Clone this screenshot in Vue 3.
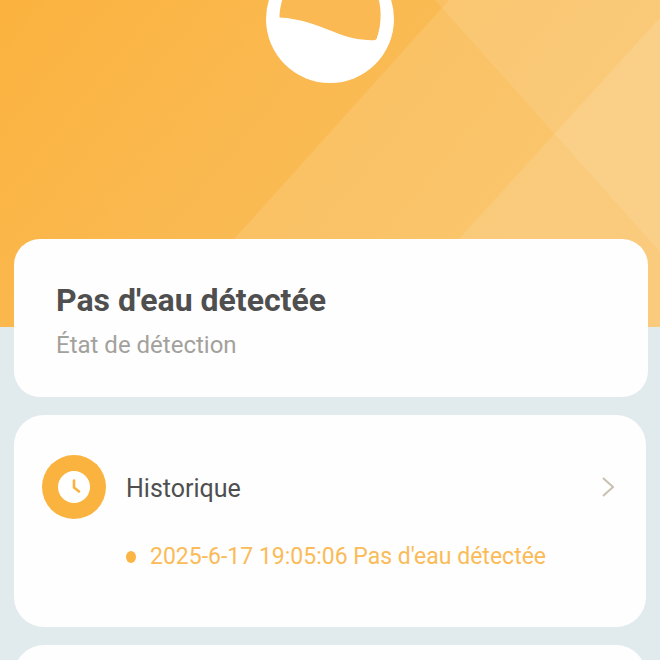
<template>
  <main class="device">
    <header class="hero">
      <!-- fond à bandes diagonales -->
      <svg class="hero-bg" viewBox="0 0 660 327" preserveAspectRatio="none" aria-hidden="true">
        <defs>
          <linearGradient id="base" gradientUnits="userSpaceOnUse" x1="0" y1="0" x2="420" y2="340">
            <stop offset="0" stop-color="#fbb23e" />
            <stop offset="0.5" stop-color="#fab950" />
            <stop offset="1" stop-color="#fabe5a" />
          </linearGradient>
        </defs>
        <rect width="660" height="327" fill="url(#base)" />
        <path class="band" d="M449 0H660V327H155Z" />
        <path class="band" d="M676 0V327H379Z" />
        <path class="band faint" d="M435 0H660V252Z" />
      </svg>

      <!-- niveau d'eau -->
      <svg class="gauge" viewBox="0 0 128 83" role="img" :aria-label="status">
        <circle cx="64" cy="19" r="64" fill="#fff" />
        <path
          fill="#fab952"
          d="M13.500 17.500C13.500 10 15 4 17 -3H112C115.500 8 116 24 110.500 39C109.500 40.200 108 40.200 106 40.200C93 40.200 80 37 67 31.500C49 24.500 34 18.500 13.500 17.500Z"
        />
      </svg>
    </header>

    <section class="card status">
      <h1>{{ status }}</h1>
      <p>État de détection</p>
    </section>

    <section class="card history">
      <button class="row" type="button">
        <svg class="clock" viewBox="0 0 64 64" aria-hidden="true">
          <circle cx="32" cy="32" r="32" fill="#fab33e" />
          <circle cx="32" cy="32" r="16" fill="#fff" />
          <path d="M32 25.500V32.500L37 36.500" />
        </svg>
        <span class="label">Historique</span>
        <svg class="chevron" viewBox="0 0 12 20" aria-hidden="true">
          <path d="M1 1L11 10L1 19" />
        </svg>
      </button>

      <ul class="events">
        <li v-for="e in events" :key="e.date">{{ e.date }} {{ e.text }}</li>
      </ul>
    </section>

    <section class="card next"></section>
  </main>
</template>

<script setup>
import { ref } from 'vue'

const status = ref("Pas d'eau détectée")
const events = ref([
  { date: '2025-6-17 19:05:06', text: "Pas d'eau détectée" },
])
</script>

<style>
body{ background: #e1eaed; }
</style>

<style scoped>
.device{
  height: 100vh;
  overflow: hidden;
  background: #e1eaed;
  font-family: Roboto, "Liberation Sans", sans-serif;
  color: #4f4f4f;
}

/* ===== bandeau ===== */
.hero{
  position: relative;
  display: flex; justify-content: center;
  padding-bottom: 244px;
}
.hero-bg{ position: absolute; inset: 0; width: 100%; height: 100%; }
.band{ fill: #fff; fill-opacity: .11; }
.band.faint{ fill-opacity: .09; }
.gauge{ position: relative; width: 128px; height: 83px; }

/* ===== cartes ===== */
.card{
  position: relative;
  margin: 0 14px 18px;
  border-radius: 30px;
  background: #fefefe;
}
.status{
  margin-top: -88px;
  margin-right: 12px;
  padding: 42px 42px 38px;
  border-radius: 26px;
}
.status h1{ margin: 0 0 12px; font-size: 32px; line-height: 38px; font-weight: 700; }
.status p{ margin: 0; font-size: 24px; line-height: 28px; color: #a3a19c; }

.history{ padding: 40px 32px 54px 28px; }
.row{
  display: flex; align-items: center; gap: 20px;
  width: 100%; padding: 0;
  border: 0; background: none; cursor: pointer;
  font: inherit; color: inherit; text-align: left;
}
.clock{ width: 64px; height: 64px; }
.clock path{ fill: none; stroke: #fab33e; stroke-width: 2.6; stroke-linecap: round; stroke-linejoin: round; }
.label{ flex: 1; padding-top: 3px; font-size: 25px; line-height: 32px; }
.chevron{ width: 12px; height: 20px; }
.chevron path{ fill: none; stroke: #c9c1b0; stroke-width: 2; }

.events{ margin: 22px 0 0 84px; padding: 0; list-style: none; }
.events li{
  display: flex; align-items: center; gap: 14px;
  font-size: 23px; line-height: 32px; color: #fabb58;
}
.events li::before{ content: ""; width: 10px; height: 12px; border-radius: 50%; background: #fab545; }

.next{ height: 120px; margin-bottom: 0; }
</style>
